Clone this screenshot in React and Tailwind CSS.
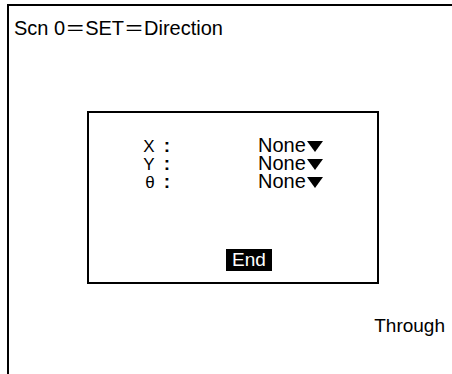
import React from "react";

function Caret() {
  return (
    <svg width="16" height="11" viewBox="0 0 16 11" className="ml-[1px] mb-[1px]">
      <polygon points="0,0 16,0 8,11" fill="black" />
    </svg>
  );
}

const rows = [
  { label: "X", value: "None" },
  { label: "Y", value: "None" },
  { label: "θ", value: "None" },
];

const cjk = { fontFamily: '"Noto Sans CJK JP", sans-serif' };

export default function App() {
  return (
    <div className="w-[452px] h-[374px] bg-white overflow-hidden pt-[4px] pl-[7px]" style={{ fontFamily: '"Liberation Sans", Arial, sans-serif' }}>
      <div className="h-[370px] border-l-2 border-t-2 border-black flex flex-col text-black">
        {/* Title */}
        <div className="pl-[5px] pt-[11px] h-[33px] text-[20px] leading-[22px] flex items-center">
          <span>Scn 0</span>
          <span style={cjk}>＝</span>
          <span>SET</span>
          <span style={cjk}>＝</span>
          <span>Direction</span>
        </div>

        {/* Dialog box */}
        <div className="ml-[78px] mt-[72px] w-[292px] h-[173px] border-2 border-black flex flex-col">
          <div className="pt-[23px] flex flex-col">
            {rows.map((r) => (
              <div key={r.label} className="flex h-[18px] items-baseline">
                <div className="w-[81px] flex justify-end items-baseline text-[17px] leading-[18px]">
                  <span>{r.label}</span>
                  <span className="ml-[9px] text-[19px] font-bold">:</span>
                </div>
                <div className="pl-[88px] flex items-baseline text-[20px] leading-[18px]">
                  <span>{r.value}</span>
                  <Caret />
                </div>
              </div>
            ))}
          </div>
          <div className="ml-[137px] mt-[59px] w-[46px] h-[22px] bg-black text-white text-[19px] leading-[22px] flex items-center justify-center">
            End
          </div>
        </div>

        {/* Footer text */}
        <div className="mt-[31px] pr-[7px] flex justify-end text-[19px] leading-[22px]">
          Through
        </div>
      </div>
    </div>
  );
}
